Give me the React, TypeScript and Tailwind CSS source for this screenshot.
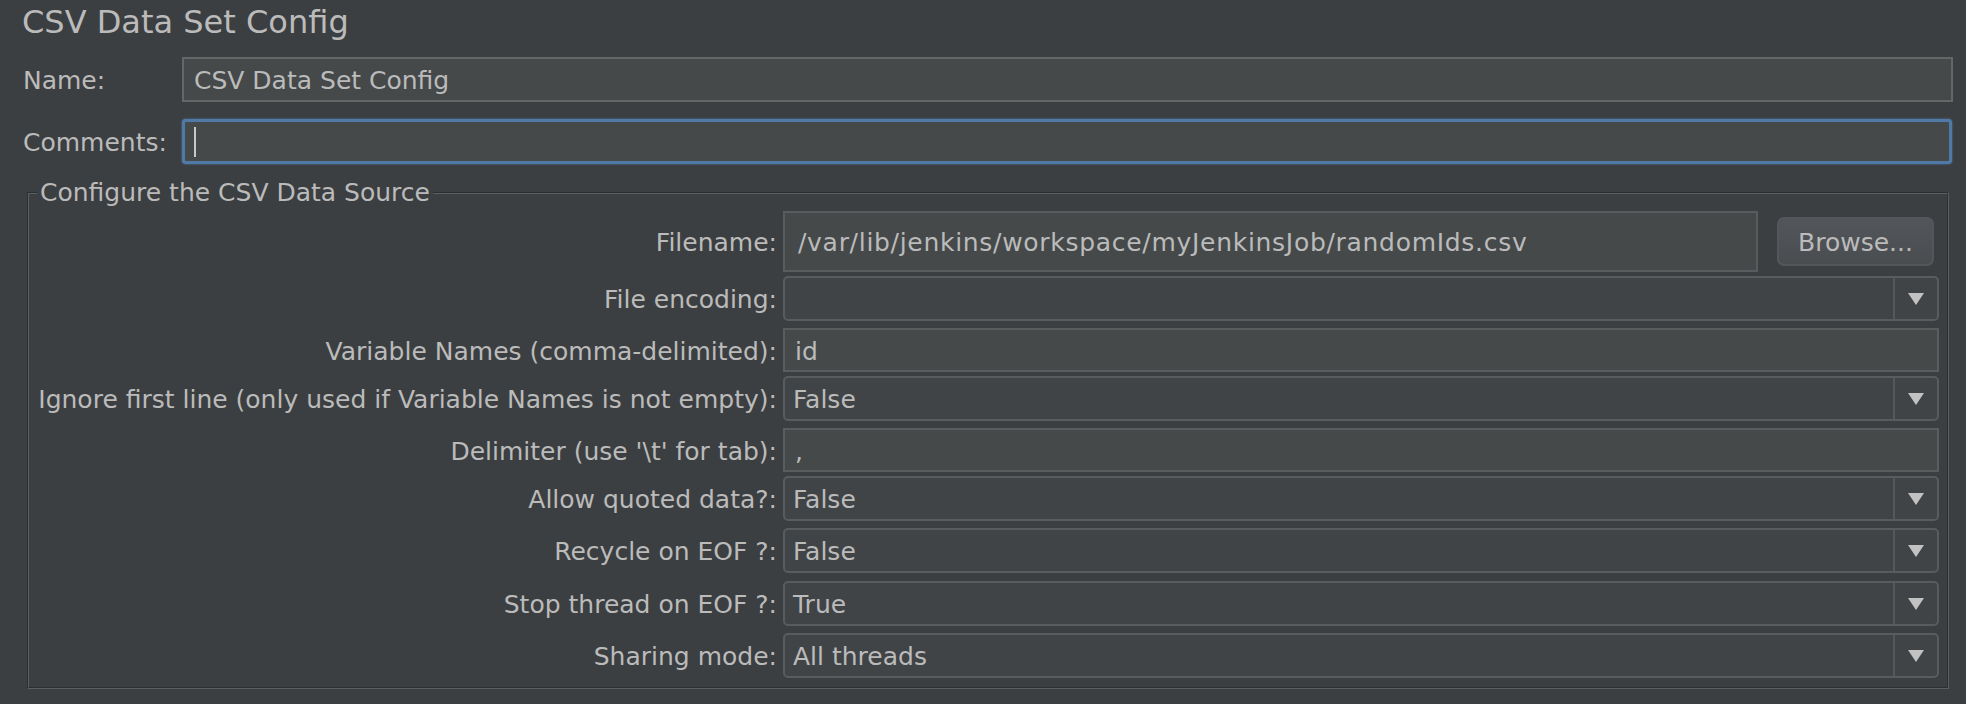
type Row = {
  label: string;
  kind: 'input' | 'combo';
  value: string;
  mt: string;
};

const rows: Row[] = [
  { label: 'File encoding:', kind: 'combo', value: '', mt: 'mt-[4px]' },
  { label: 'Variable Names (comma-delimited):', kind: 'input', value: 'id', mt: 'mt-[7px]' },
  { label: 'Ignore first line (only used if Variable Names is not empty):', kind: 'combo', value: 'False', mt: 'mt-[4px]' },
  { label: "Delimiter (use '\\t' for tab):", kind: 'input', value: ',', mt: 'mt-[7px]' },
  { label: 'Allow quoted data?:', kind: 'combo', value: 'False', mt: 'mt-[4px]' },
  { label: 'Recycle on EOF ?:', kind: 'combo', value: 'False', mt: 'mt-[7px]' },
  { label: 'Stop thread on EOF ?:', kind: 'combo', value: 'True', mt: 'mt-[8px]' },
  { label: 'Sharing mode:', kind: 'combo', value: 'All threads', mt: 'mt-[7px]' },
];

const Arrow = () => (
  <svg width="16" height="12" viewBox="0 0 16 12">
    <polygon points="0,0 16,0 8,12" fill="#c2c2c2" />
  </svg>
);

const Combo = ({ value }: { value: string }) => (
  <div className="flex h-[45px] flex-1 items-stretch rounded-[5px] border-2 border-[#595c5e] bg-[#414446]">
    <div className="flex flex-1 items-center pl-[8px] pt-[3px]">{value}</div>
    <div className="flex w-[44px] items-center justify-center border-l-2 border-[#55585a]">
      <Arrow />
    </div>
  </div>
);

const TextInput = ({ value }: { value: string }) => (
  <div className="flex h-[44px] flex-1 items-center border-2 border-[#5a5d5f] bg-[#45494a] pl-[10px] pt-[3px]">
    {value}
  </div>
);

const App = () => {
  return (
    <div
      className="h-[704px] w-[1966px] overflow-hidden bg-[#3c3f41] text-[25px] text-[#bbbbbb]"
      style={{ fontFamily: '"DejaVu Sans", "Open Sans", sans-serif' }}
    >
      <div className="pl-[22px] pt-[2px] text-[32px] leading-[40px]">CSV Data Set Config</div>

      <div className="mt-[15px] flex h-[45px] items-center pl-[23px] pr-[13px]">
        <div className="w-[159px] pt-[3px]">Name:</div>
        <div className="flex h-full flex-1 items-center border-2 border-[#646768] bg-[#45494a] pl-[10px] pt-[3px]">
          CSV Data Set Config
        </div>
      </div>

      <div className="mt-[17px] flex h-[45px] items-center pl-[23px] pr-[14px]">
        <div className="w-[159px] pt-[3px]">Comments:</div>
        <div className="flex h-full flex-1 items-center rounded-[4px] border-[3px] border-[#4f7aa8] bg-[#45494a] pl-[9px] shadow-[0_0_2px_#5a86b8]">
          <div className="h-[30px] w-[2px] bg-[#c8c8c8]" />
        </div>
      </div>

      <div className="relative ml-[27px] mt-[28px] w-[1922px] border border-b-[#5c5f61] border-l-[#2c2e30] border-r-[#5c5f61] border-t-[#2c2e30]">
        <div className="absolute -top-[15px] left-[9px] bg-[#3c3f41] px-[3px] leading-[30px]">
          Configure the CSV Data Source
        </div>
        <div className="border border-b-[#2c2e30] border-l-[#5c5f61] border-r-[#2c2e30] border-t-[#5c5f61] pb-[9px] pr-[8px] pt-[17px]">
          <div className="flex h-[61px] items-center">
            <div className="w-[748px] pt-[3px] text-right">Filename:</div>
            <div className="ml-[6px] flex h-full flex-1 items-center border-2 border-[#595c5e] bg-[#45494a] pl-[13px] pt-[3px] tracking-[0.7px]">
              /var/lib/jenkins/workspace/myJenkinsJob/randomIds.csv
            </div>
            <div className="ml-[19px] mr-[5px] flex h-[49px] w-[157px] items-center justify-center rounded-[7px] border-2 border-[#54575a] bg-gradient-to-b from-[#52565a] to-[#4a4d50] pt-[3px]">
              Browse...
            </div>
          </div>
          {rows.map((r) => (
            <div key={r.label} className={`flex items-center ${r.mt}`}>
              <div className="w-[748px] pt-[3px] text-right">{r.label}</div>
              <div className="ml-[6px] flex flex-1">
                {r.kind === 'combo' ? <Combo value={r.value} /> : <TextInput value={r.value} />}
              </div>
            </div>
          ))}
        </div>
      </div>
    </div>
  );
};

export default App;
